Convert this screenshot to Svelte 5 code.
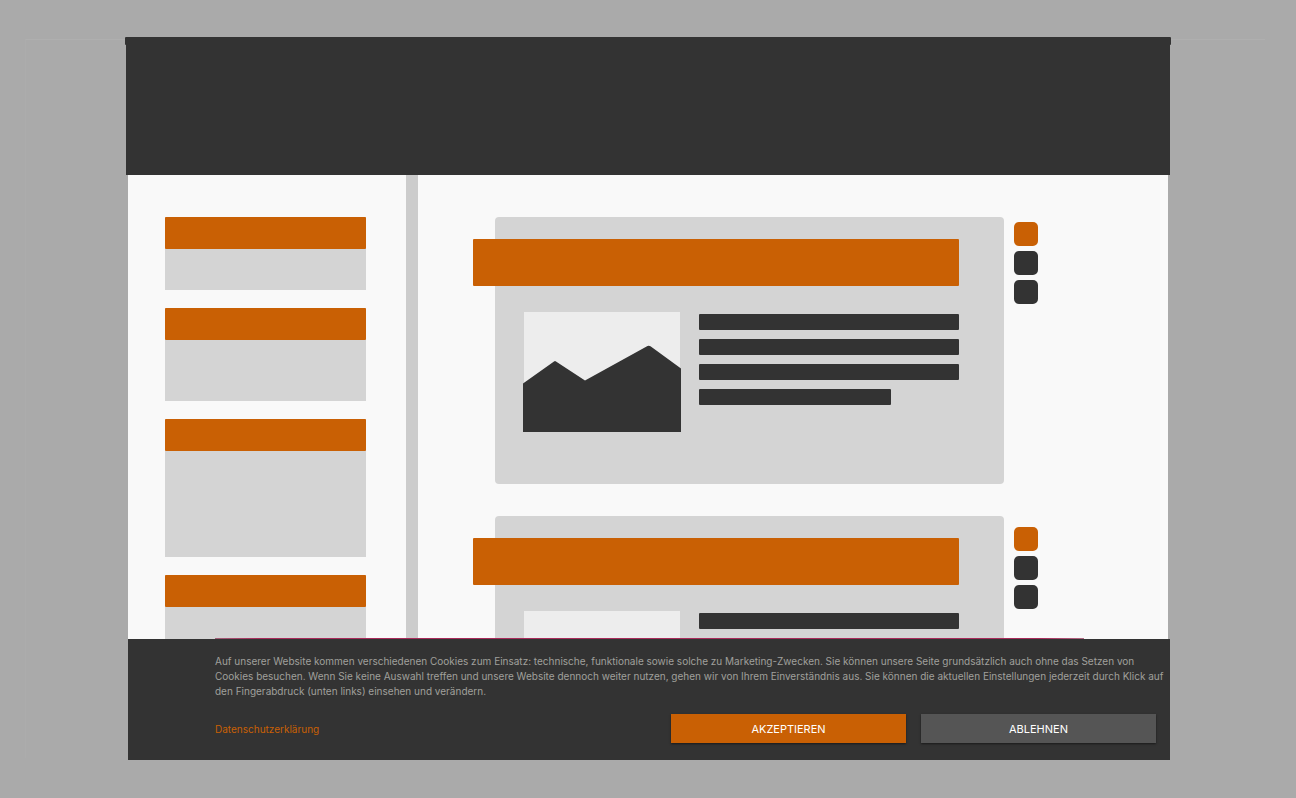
<script>
    let sideBoxes = ["small", "medium", "large", "large"];
    let posts = [1, 2];
</script>

<div class="page">
    <header class="banner"></header>
    <div class="content">
        <aside class="sidebar">
            {#each sideBoxes as size}
                <section class="sidebox {size}">
                    <div class="sidebox-title"></div>
                </section>
            {/each}
        </aside>
        <main class="main">
            <div class="posts">
                {#each posts as post}
                    <article class="post">
                        <div class="post-title"></div>
                        <div class="post-body">
                            <svg class="picture" viewBox="0 0 158 120">
                                <rect x="1" y="0" width="156" height="120" fill="#ededed" />
                                <path d="M0 71.5 L31 49.5 Q32 48.5 33 49.5 L62 68.5 L124.5 34 Q126 33.2 127.5 34.2 L158 56.5 V120 H0 Z" fill="#333" />
                            </svg>
                            <div class="lines">
                                <div class="line"></div>
                                <div class="line"></div>
                                <div class="line"></div>
                                <div class="line short"></div>
                            </div>
                        </div>
                    </article>
                {/each}
            </div>
            <div class="markers">
                {#each posts as post}
                    <div class="marker-group">
                        <div class="marker active"></div>
                        <div class="marker"></div>
                        <div class="marker"></div>
                    </div>
                {/each}
            </div>
        </main>
    </div>
    <footer class="cookiebar">
        <p>
            Auf unserer Website kommen verschiedenen Cookies zum Einsatz: technische, funktionale sowie solche zu Marketing-Zwecken. Sie können unsere Seite grundsätzlich auch ohne das Setzen von Cookies besuchen. Wenn Sie keine Auswahl treffen und unsere Website dennoch weiter nutzen, gehen wir von Ihrem Einverständnis aus. Sie können die aktuellen Einstellungen jederzeit durch Klick auf den Fingerabdruck (unten links) einsehen und verändern.
        </p>
        <div class="actions">
            <a href="/datenschutz">Datenschutzerklärung</a>
            <div class="buttons">
                <button class="accept">AKZEPTIEREN</button>
                <button>ABLEHNEN</button>
            </div>
        </div>
    </footer>
</div>

<style>
    :global(body) {
        margin: 0;
        background-color: #aaa;
    }

    .page {
        position: relative;
        display: flex;
        flex-direction: column;
        box-sizing: border-box;
        height: 100vh;
        padding: 37px 126px 38px;
        font-family: Inter, "Liberation Sans", sans-serif;
        font-size: 10px;
    }

    /* faint frame behind the page */
    .page::before {
        content: "";
        position: absolute;
        top: 39px;
        left: 25px;
        right: 31px;
        bottom: 40px;
        border-top: 1px solid #afafaf;
        border-left: 1px solid #acacac;
    }

    .banner {
        position: relative;
        flex: none;
        height: 138px;
        background-color: #333;
    }

    .banner::before {
        content: "";
        position: absolute;
        top: 0;
        left: -1px;
        right: -1px;
        height: 8px;
        border-radius: 1px;
        background-color: #333;
    }

    .content {
        position: relative;
        display: flex;
        flex: 1;
        min-height: 0;
        margin: 0 2px;
        overflow: hidden;
        background-color: #f9f9f9;
    }

    .sidebar {
        flex: none;
        display: flex;
        flex-direction: column;
        gap: 18px;
        width: 201px;
        padding: 42px 40px 0 37px;
        border-right: 12px solid #ccc;
    }

    .sidebox {
        flex: none;
        background-color: #d4d4d4;
    }

    .small {
        height: 73px;
    }

    .medium {
        height: 93px;
    }

    .large {
        height: 138px;
    }

    .sidebox-title {
        height: 32px;
        border-radius: 1px;
        background-color: #c96004;
    }

    .main {
        flex: 1;
        display: flex;
        gap: 10px;
        padding: 42px 130px 0 77px;
    }

    .posts {
        flex: 1;
        display: flex;
        flex-direction: column;
        gap: 32px;
    }

    .post {
        flex: none;
        box-sizing: border-box;
        height: 267px;
        padding: 22px 45px 0 28px;
        border-radius: 4px;
        background-color: #d4d4d4;
    }

    .post-title {
        height: 47px;
        margin-left: -50px;
        border-radius: 1px;
        background-color: #c96004;
    }

    .post-body {
        display: flex;
        gap: 18px;
        margin-top: 26px;
    }

    .picture {
        flex: none;
        width: 158px;
        height: 120px;
    }

    .lines {
        flex: 1;
        display: flex;
        flex-direction: column;
        gap: 9px;
        padding-top: 2px;
    }

    .line {
        height: 16px;
        border-radius: 1px;
        background-color: #333;
    }

    .short {
        width: 74%;
    }

    .markers {
        display: flex;
        flex-direction: column;
        gap: 223px;
        padding-top: 5px;
    }

    .marker-group {
        display: flex;
        flex-direction: column;
        gap: 5px;
    }

    .marker {
        width: 24px;
        height: 24px;
        border-radius: 5px;
        background-color: #333;
    }

    .active {
        background-color: #c96004;
    }

    .cookiebar {
        position: relative;
        flex: none;
        margin-left: 2px;
        padding: 15px 4px 17px 87px;
        background-color: #333;
    }

    .cookiebar::before {
        content: "";
        position: absolute;
        top: -1px;
        left: 87px;
        right: 86px;
        height: 1px;
        background: linear-gradient(to right, #a06078, #a82a5a 5%, #a82a5a 95%, #b06a84);
    }

    p {
        margin: 0;
        line-height: 15px;
        color: #a0a09c;
    }

    .actions {
        display: flex;
        align-items: center;
        justify-content: space-between;
        margin-top: 15px;
        padding-right: 10px;
    }

    a {
        color: #c96004;
        text-decoration: none;
    }

    .buttons {
        display: flex;
        gap: 15px;
    }

    button {
        width: 235px;
        height: 29px;
        padding: 0;
        border: none;
        font-family: inherit;
        font-size: 11px;
        color: #fff;
        background-color: #555;
        box-shadow: 0 1px 2px rgba(0, 0, 0, 0.5);
    }

    .accept {
        background-color: #c96004;
    }
</style>
